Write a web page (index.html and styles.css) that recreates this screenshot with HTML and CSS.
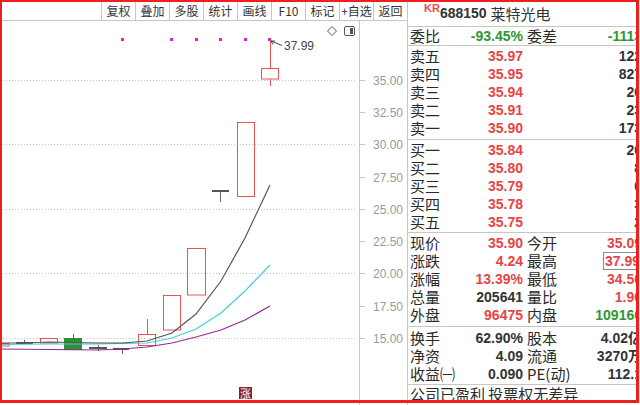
FILE: index.html
```html
<!DOCTYPE html>
<html>
<head>
    <meta charset="utf-8">
    <title>688150 莱特光电</title>
    <link rel="stylesheet" href="styles.css">
</head>
<body>
<div class="screen">
  <div class="chart-pane">
    <div class="toolbar">
      <span class="tool">复权</span>
      <span class="tool">叠加</span>
      <span class="tool">多股</span>
      <span class="tool">统计</span>
      <span class="tool">画线</span>
      <span class="tool">F10</span>
      <span class="tool">标记</span>
      <span class="tool">+自选</span>
      <span class="tool">返回</span>
    </div>
    <svg class="kline" width="407" height="384" viewBox="0 21 407 384">
      <!-- grid -->
      <g class="grid">
        <line x1="0" y1="80.5" x2="357" y2="80.5"/>
        <line x1="0" y1="144.5" x2="357" y2="144.5"/>
        <line x1="0" y1="209.5" x2="357" y2="209.5"/>
        <line x1="0" y1="273.5" x2="357" y2="273.5"/>
        <line x1="0" y1="338.5" x2="357" y2="338.5"/>
      </g>
      <line class="axis" x1="359.5" y1="21" x2="359.5" y2="405"/>
      <g class="ticks">
        <line x1="360" y1="80.5" x2="365" y2="80.5"/>
        <line x1="360" y1="112.5" x2="365" y2="112.5"/>
        <line x1="360" y1="144.5" x2="365" y2="144.5"/>
        <line x1="360" y1="177.5" x2="365" y2="177.5"/>
        <line x1="360" y1="209.5" x2="365" y2="209.5"/>
        <line x1="360" y1="241.5" x2="365" y2="241.5"/>
        <line x1="360" y1="273.5" x2="365" y2="273.5"/>
        <line x1="360" y1="306.5" x2="365" y2="306.5"/>
        <line x1="360" y1="338.5" x2="365" y2="338.5"/>
      </g>
      <g class="ylabels">
        <text x="373" y="85">35.00</text>
        <text x="373" y="117">32.50</text>
        <text x="373" y="149">30.00</text>
        <text x="373" y="182">27.50</text>
        <text x="373" y="214">25.00</text>
        <text x="373" y="246">22.50</text>
        <text x="373" y="278">20.00</text>
        <text x="373" y="311">17.50</text>
        <text x="373" y="343">15.00</text>
      </g>

      <!-- tool icons -->
      <polygon class="icon" points="332,26.5 336.5,31 332,35.5 327.5,31"/>
      <rect class="icon" x="344.5" y="26.5" width="10" height="9" rx="1.5"/>
      <rect class="icon-fill" x="350" y="28" width="3" height="6"/>

      <!-- signal dots -->
      <g class="dots">
        <rect x="121" y="38" width="3" height="3"/>
        <rect x="170" y="38" width="3" height="3"/>
        <rect x="195" y="38" width="3" height="3"/>
        <rect x="219" y="38" width="3" height="3"/>
        <rect x="244" y="38" width="3" height="3"/>
        <rect x="268" y="38" width="3" height="3"/>
      </g>

      <!-- candles -->
      <g class="up">
        <rect x="-9" y="343.5" width="18" height="2.5"/>
        <rect x="40.5" y="338.5" width="17" height="4.5"/>
        <line x1="147.5" y1="319" x2="147.5" y2="334.5"/>
        <rect x="138.5" y="334.5" width="17" height="11"/>
        <rect x="163.5" y="295.5" width="17" height="34.5"/>
        <rect x="187.5" y="248.5" width="18" height="46.5"/>
        <rect x="237.5" y="122.5" width="17" height="74"/>
        <line x1="270.5" y1="40" x2="270.5" y2="68.5"/>
        <line x1="270.5" y1="79" x2="270.5" y2="86"/>
        <rect x="261.5" y="68.5" width="17" height="10.5"/>
      </g>
      <g class="flat">
        <line x1="24.5" y1="340" x2="24.5" y2="343"/>
        <rect x="16" y="342" width="17" height="2"/>
        <line x1="98.5" y1="345" x2="98.5" y2="351"/>
        <rect x="89" y="347" width="18" height="2"/>
        <line x1="122.5" y1="349" x2="122.5" y2="354"/>
        <rect x="113" y="348" width="16" height="2"/>
        <line x1="220.5" y1="191" x2="220.5" y2="202"/>
        <rect x="212" y="190" width="17" height="2"/>
      </g>
      <g class="down">
        <line x1="73.5" y1="334" x2="73.5" y2="338"/>
        <rect x="64" y="338" width="18" height="12"/>
      </g>

      <!-- moving averages -->
      <polyline class="ma20" points="0,349 49,349.5 98,350 122,349 147,347 172,343 196,337 221,330 245,320 270,306"/>
      <polyline class="ma10" points="0,344.5 49,344 98,344 122,343.5 147,343 172,338 196,329 221,313 245,291 270,265"/>
      <polyline class="ma5" points="0,343 24,343 49,342 73,342.5 98,343 122,343 147,341 172,333 196,314 221,281 245,238 270,185"/>

      <!-- high marker -->
      <polyline class="mark" points="275,41 271,41 273,44.5"/>
      <line class="mark" x1="271" y1="41" x2="282" y2="45.5"/>
      <text class="high" x="284" y="50">37.99</text>

      <!-- limit-up badge -->
      <rect class="badge" x="239" y="387" width="13" height="12"/>
      <text class="badge-text" x="245.5" y="397.5">涨</text>
    </svg>
  </div>

  <div class="quote-pane">
    <div class="quote-head">
      <span class="mkt">KR</span><span class="code">688150</span><span class="name">莱特光电</span>
    </div>

    <div class="qsec">
      <div class="qrow"><span class="lb">委比</span><span class="v green">-93.45%</span><span class="lb2">委差</span><span class="v green">-1113</span></div>
    </div>

    <div class="qsec sell">
      <div class="qrow"><span class="lb">卖五</span><span class="v red">35.97</span><span class="lb2"></span><span class="v">122</span></div>
      <div class="qrow"><span class="lb">卖四</span><span class="v red">35.95</span><span class="lb2"></span><span class="v">827</span></div>
      <div class="qrow"><span class="lb">卖三</span><span class="v red">35.94</span><span class="lb2"></span><span class="v">26</span></div>
      <div class="qrow"><span class="lb">卖二</span><span class="v red">35.91</span><span class="lb2"></span><span class="v">23</span></div>
      <div class="qrow"><span class="lb">卖一</span><span class="v red">35.90</span><span class="lb2"></span><span class="v">173</span></div>
    </div>

    <div class="qsec buy">
      <div class="qrow"><span class="lb">买一</span><span class="v red">35.84</span><span class="lb2"></span><span class="v">20</span></div>
      <div class="qrow"><span class="lb">买二</span><span class="v red">35.80</span><span class="lb2"></span><span class="v">8</span></div>
      <div class="qrow"><span class="lb">买三</span><span class="v red">35.79</span><span class="lb2"></span><span class="v">6</span></div>
      <div class="qrow"><span class="lb">买四</span><span class="v red">35.78</span><span class="lb2"></span><span class="v">3</span></div>
      <div class="qrow"><span class="lb">买五</span><span class="v red">35.75</span><span class="lb2"></span><span class="v">2</span></div>
    </div>

    <div class="qsec stats">
      <div class="qrow"><span class="lb">现价</span><span class="v red">35.90</span><span class="lb2">今开</span><span class="v red">35.09</span></div>
      <div class="qrow"><span class="lb">涨跌</span><span class="v red">4.24</span><span class="lb2">最高</span><span class="v red"><span class="boxed">37.99</span></span></div>
      <div class="qrow"><span class="lb">涨幅</span><span class="v red">13.39%</span><span class="lb2">最低</span><span class="v red">34.50</span></div>
      <div class="qrow"><span class="lb">总量</span><span class="v">205641</span><span class="lb2">量比</span><span class="v red">1.96</span></div>
      <div class="qrow"><span class="lb">外盘</span><span class="v red">96475</span><span class="lb2">内盘</span><span class="v green">109166</span></div>
    </div>

    <div class="qsec fin">
      <div class="qrow"><span class="lb">换手</span><span class="v">62.90%</span><span class="lb2">股本</span><span class="v">4.02亿</span></div>
      <div class="qrow"><span class="lb">净资</span><span class="v">4.09</span><span class="lb2">流通</span><span class="v">3270万</span></div>
      <div class="qrow"><span class="lb">收益㈠</span><span class="v">0.090</span><span class="lb2">PE(动)</span><span class="v">112.1</span></div>
    </div>

    <div class="qnote">公司已盈利 投票权无差异</div>
  </div>

  <div class="frame"></div>
</div>
</body>
</html>
```

FILE: styles.css
```css
body {
    margin: 0;
    width: 640px;
    height: 405px;
    overflow: hidden;
    background: #fff;
    font-family: "Noto Sans CJK SC", "Liberation Sans", sans-serif;
    color: #2a2a2a;
}

.screen {
    position: relative;
    display: flex;
    width: 640px;
    height: 405px;
}

/* ---- chart ---- */

.chart-pane {
    width: 407px;
    flex: none;
}

.toolbar {
    display: flex;
    height: 20px;
    padding-left: 101px;
    border-bottom: 1px solid #c6c6c6;
}

.tool {
    width: 34px;
    box-sizing: border-box;
    border-left: 1px solid #c6c6c6;
    text-align: center;
    font-size: 12px;
    line-height: 21px;
    color: #333;
    white-space: nowrap;
}

.kline {
    display: block;
}

.grid line {
    stroke: #c4c4c4;
    stroke-width: 1;
    stroke-dasharray: 1 2;
}

.axis, .ticks line {
    stroke: #c8c8c8;
    stroke-width: 1;
}

.ylabels text {
    font-family: "Liberation Sans", sans-serif;
    font-size: 12px;
    fill: #9a9a9a;
}

.icon {
    fill: #fff;
    stroke: #555;
    stroke-width: 1;
}

.icon-fill {
    fill: #555;
}

.dots rect {
    fill: #e020e0;
}

.up rect, .up line {
    fill: none;
    stroke: #e65454;
    stroke-width: 1;
}

.flat rect {
    fill: #555;
}

.flat line {
    stroke: #666;
    stroke-width: 1;
}

.down rect {
    fill: #2f8f33;
}

.down line {
    stroke: #2f8f33;
    stroke-width: 1;
}

.ma5, .ma10, .ma20 {
    fill: none;
    stroke-width: 1.2;
}

.ma5 { stroke: #555; }
.ma10 { stroke: #40d0d6; }
.ma20 { stroke: #8e2c96; }

.mark {
    fill: none;
    stroke: #444;
    stroke-width: 1;
}

.high {
    font-family: "Liberation Sans", sans-serif;
    font-size: 12px;
    fill: #444;
}

.badge {
    fill: #8e1f1f;
}

.badge-text {
    font-family: "Noto Sans CJK SC", sans-serif;
    font-size: 11px;
    fill: #fff;
    text-anchor: middle;
}

/* ---- quote panel ---- */

.quote-pane {
    width: 229px;
    flex: none;
    border-left: 1px solid #c6c6c6;
    overflow: hidden;
}

.quote-head {
    display: flex;
    align-items: center;
    height: 27px;
    width: 234px;
    padding-left: 16px;
    box-sizing: border-box;
    border-bottom: 1px solid #c6c6c6;
}

.mkt {
    align-self: flex-start;
    margin-top: 2px;
    font-family: "Liberation Sans", sans-serif;
    font-weight: bold;
    font-size: 11px;
    color: #e84a4a;
}

.code {
    font-family: "Liberation Sans", sans-serif;
    font-weight: bold;
    font-size: 14px;
    color: #333;
}

.name {
    margin-left: 4px;
    font-size: 15px;
    color: #333;
}

.qsec {
    width: 234px;
    border-bottom: 1px solid #c6c6c6;
}

.sell { padding: 1px 0 2px; }
.buy { padding: 1px 0 1px; }
.stats { padding: 1px 0 2px; }
.fin { padding: 2px 0 1px; }

.qrow {
    display: grid;
    grid-template-columns: 40px 73px 44px 75px;
    height: 18px;
    line-height: 18px;
    padding-left: 2px;
    white-space: nowrap;
}

.lb, .lb2 {
    font-size: 15px;
    color: #2a2a2a;
    overflow: visible;
}

.lb2 {
    padding-left: 4px;
}

.v {
    text-align: right;
    font-family: "Liberation Sans", "Noto Sans CJK SC", sans-serif;
    font-weight: bold;
    font-size: 14px;
    color: #333;
}

.v.red { color: #e64545; }
.v.green { color: #2f9635; }

.boxed {
    display: inline-block;
    border: 1px solid #8a8a8a;
    line-height: 16px;
    padding: 0 1px;
}

.qnote {
    width: 234px;
    padding-left: 2px;
    font-size: 15px;
    line-height: 18px;
    white-space: nowrap;
    color: #2a2a2a;
}

/* red selection frame laid over everything */
.frame {
    position: absolute;
    left: -1px;
    top: -1px;
    width: 640px;
    height: 404px;
    box-sizing: border-box;
    border: 3px solid #f01e1e;
    pointer-events: none;
}
```
